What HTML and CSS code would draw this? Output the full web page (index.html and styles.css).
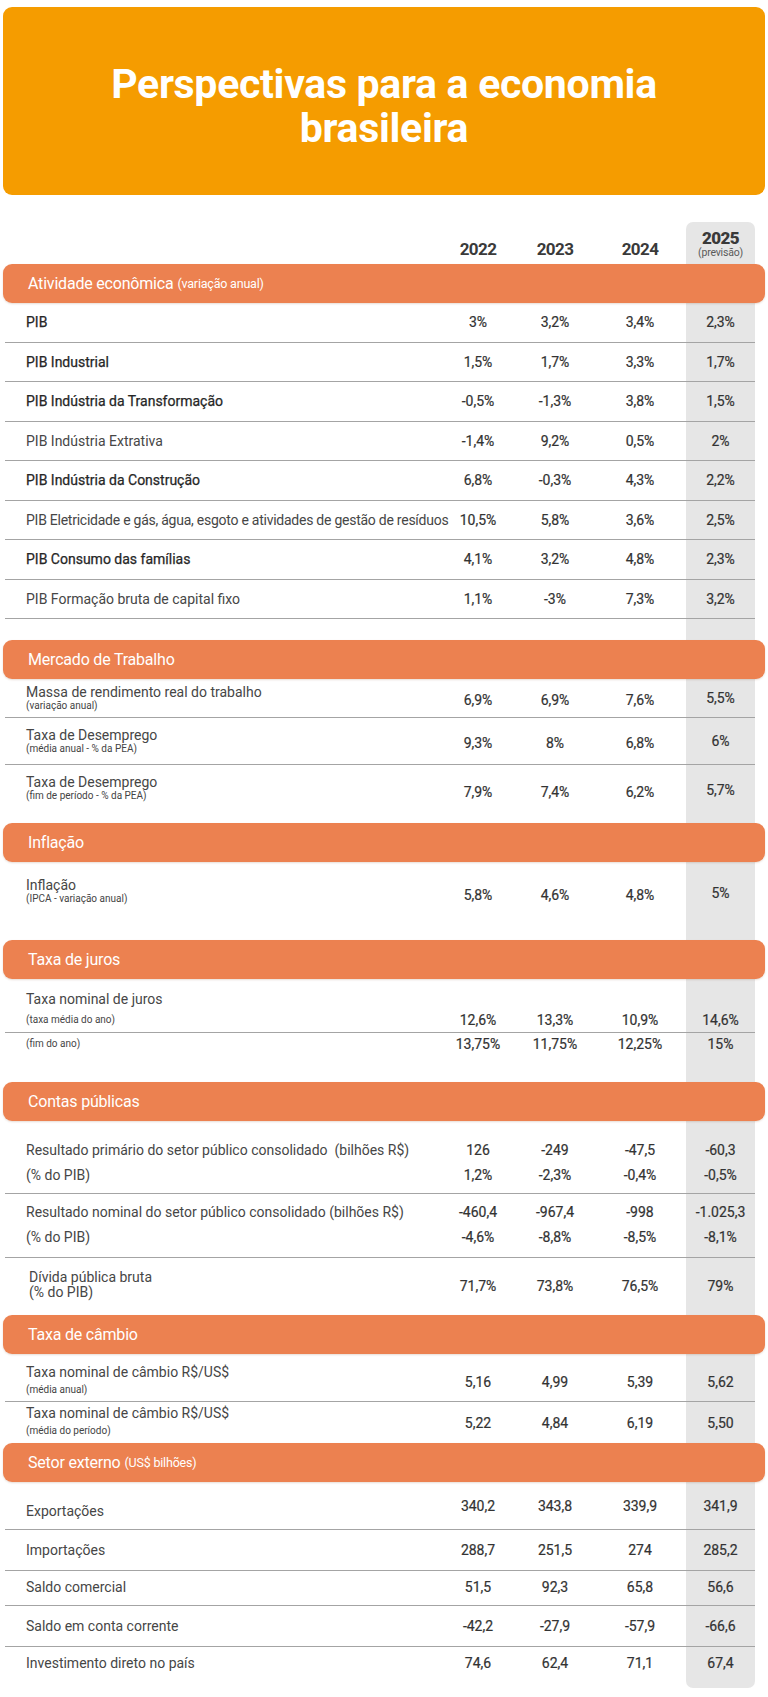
FILE: index.html
```html
<!DOCTYPE html>
<html lang="pt-BR">
<head>
<meta charset="utf-8">
<title>Perspectivas para a economia brasileira</title>
<link rel="stylesheet" href="styles.css">
</head>
<body>
<div class="page">
  <header class="hero">
    <h1 class="hero-title">Perspectivas para a economia<br>brasileira</h1>
  </header>

  <div class="sheet">
    <div class="years">
      <span></span>
      <span class="yr">2022</span>
      <span class="yr">2023</span>
      <span class="yr">2024</span>
      <span class="yr yr-fc"><b>2025</b><small>(previsão)</small></span>
    </div>

    <section class="sec">
      <h2 class="bar">Atividade econômica <small>(variação anual)</small></h2>
      <div class="body body-ativ">
        <div class="row r-std"><span class="lbl strong">PIB</span><span class="n">3%</span><span class="n">3,2%</span><span class="n">3,4%</span><span class="n">2,3%</span></div>
        <div class="row r-std"><span class="lbl strong">PIB Industrial</span><span class="n">1,5%</span><span class="n">1,7%</span><span class="n">3,3%</span><span class="n">1,7%</span></div>
        <div class="row r-std"><span class="lbl strong">PIB Indústria da Transformação</span><span class="n">-0,5%</span><span class="n">-1,3%</span><span class="n">3,8%</span><span class="n">1,5%</span></div>
        <div class="row r-std"><span class="lbl">PIB Indústria Extrativa</span><span class="n">-1,4%</span><span class="n">9,2%</span><span class="n">0,5%</span><span class="n">2%</span></div>
        <div class="row r-std"><span class="lbl strong">PIB Indústria da Construção</span><span class="n">6,8%</span><span class="n">-0,3%</span><span class="n">4,3%</span><span class="n">2,2%</span></div>
        <div class="row r-std"><span class="lbl tight">PIB Eletricidade e gás, água, esgoto e atividades de gestão de resíduos</span><span class="n">10,5%</span><span class="n">5,8%</span><span class="n">3,6%</span><span class="n">2,5%</span></div>
        <div class="row r-std"><span class="lbl strong">PIB Consumo das famílias</span><span class="n">4,1%</span><span class="n">3,2%</span><span class="n">4,8%</span><span class="n">2,3%</span></div>
        <div class="row r-std"><span class="lbl">PIB Formação bruta de capital fixo</span><span class="n">1,1%</span><span class="n">-3%</span><span class="n">7,3%</span><span class="n">3,2%</span></div>
      </div>
    </section>

    <section class="sec">
      <h2 class="bar">Mercado de Trabalho</h2>
      <div class="body">
        <div class="row r-tr1 line"><span class="lbl two">Massa de rendimento real do trabalho<small>(variação anual)</small></span><span class="n low">6,9%</span><span class="n low">6,9%</span><span class="n low">7,6%</span><span class="n">5,5%</span></div>
        <div class="row r-tr2 line"><span class="lbl two">Taxa de Desemprego<small>(média anual - % da PEA)</small></span><span class="n low">9,3%</span><span class="n low">8%</span><span class="n low">6,8%</span><span class="n">6%</span></div>
        <div class="row r-tr3"><span class="lbl two">Taxa de Desemprego<small>(fim de período - % da PEA)</small></span><span class="n low2">7,9%</span><span class="n low2">7,4%</span><span class="n low2">6,2%</span><span class="n low">5,7%</span></div>
      </div>
    </section>

    <section class="sec">
      <h2 class="bar">Inflação</h2>
      <div class="body">
        <div class="row r-inf"><span class="lbl two">Inflação<small>(IPCA - variação anual)</small></span><span class="n low2">5,8%</span><span class="n low2">4,6%</span><span class="n low2">4,8%</span><span class="n low">5%</span></div>
      </div>
    </section>

    <section class="sec">
      <h2 class="bar">Taxa de juros</h2>
      <div class="body body-juros">
        <div class="row-title">Taxa nominal de juros</div>
        <div class="row r-jb line"><span class="lbl sub">(taxa média do ano)</span><span class="n">12,6%</span><span class="n">13,3%</span><span class="n">10,9%</span><span class="n">14,6%</span></div>
        <div class="row r-jc"><span class="lbl sub">(fim do ano)</span><span class="n">13,75%</span><span class="n">11,75%</span><span class="n">12,25%</span><span class="n">15%</span></div>
      </div>
    </section>

    <section class="sec">
      <h2 class="bar">Contas públicas</h2>
      <div class="body">
        <div class="group g1 line">
          <div class="row r-sub"><span class="lbl">Resultado primário do setor público consolidado&nbsp; (bilhões R$)</span><span class="n">126</span><span class="n">-249</span><span class="n">-47,5</span><span class="n">-60,3</span></div>
          <div class="row r-sub"><span class="lbl">(% do PIB)</span><span class="n">1,2%</span><span class="n">-2,3%</span><span class="n">-0,4%</span><span class="n">-0,5%</span></div>
        </div>
        <div class="group g2 line">
          <div class="row r-sub"><span class="lbl">Resultado nominal do setor público consolidado (bilhões R$)</span><span class="n">-460,4</span><span class="n">-967,4</span><span class="n">-998</span><span class="n">-1.025,3</span></div>
          <div class="row r-sub"><span class="lbl">(% do PIB)</span><span class="n">-4,6%</span><span class="n">-8,8%</span><span class="n">-8,5%</span><span class="n">-8,1%</span></div>
        </div>
        <div class="row r-div"><span class="lbl indent">Dívida pública bruta<br>(% do PIB)</span><span class="n">71,7%</span><span class="n">73,8%</span><span class="n">76,5%</span><span class="n">79%</span></div>
      </div>
    </section>

    <section class="sec">
      <h2 class="bar">Taxa de câmbio</h2>
      <div class="body">
        <div class="row r-cb1 line"><span class="lbl two wide">Taxa nominal de câmbio R$/US$<small>(média anual)</small></span><span class="n low">5,16</span><span class="n low">4,99</span><span class="n low">5,39</span><span class="n low">5,62</span></div>
        <div class="row r-cb2"><span class="lbl two wide">Taxa nominal de câmbio R$/US$<small>(média do período)</small></span><span class="n low">5,22</span><span class="n low">4,84</span><span class="n low">6,19</span><span class="n low">5,50</span></div>
      </div>
    </section>

    <section class="sec">
      <h2 class="bar">Setor externo <small>(US$ bilhões)</small></h2>
      <div class="body">
        <div class="row r-ex1 line"><span class="lbl bottom">Exportações</span><span class="n top">340,2</span><span class="n top">343,8</span><span class="n top">339,9</span><span class="n top">341,9</span></div>
        <div class="row r-ex2 line"><span class="lbl">Importações</span><span class="n">288,7</span><span class="n">251,5</span><span class="n">274</span><span class="n">285,2</span></div>
        <div class="row r-ex3 line"><span class="lbl">Saldo comercial</span><span class="n">51,5</span><span class="n">92,3</span><span class="n">65,8</span><span class="n">56,6</span></div>
        <div class="row r-ex2 line"><span class="lbl">Saldo em conta corrente</span><span class="n">-42,2</span><span class="n">-27,9</span><span class="n">-57,9</span><span class="n">-66,6</span></div>
        <div class="row r-ex5"><span class="lbl">Investimento direto no país</span><span class="n">74,6</span><span class="n">62,4</span><span class="n">71,1</span><span class="n">67,4</span></div>
      </div>
    </section>
  </div>
</div>
</body>
</html>
```

FILE: styles.css
```css
* { box-sizing: border-box; }

html, body {
  margin: 0;
  padding: 0;
  background: #ffffff;
}

body {
  font-family: Roboto, "Liberation Sans", sans-serif;
  color: #3d3d3d;
}

.page {
  width: 768px;
  padding-bottom: 7px;
}

/* ---------- hero ---------- */
.hero {
  margin: 7px 3px 0;
  height: 188px;
  padding-top: 55px;
  background: #f59c00;
  border-radius: 9px;
  text-align: center;
}

.hero-title {
  margin: 0;
  color: #ffffff;
  font-weight: 700;
  font-size: 41px;
  line-height: 44px;
  letter-spacing: -0.3px;
}

/* ---------- sheet ---------- */
.sheet {
  margin: 27px 3px 0;
}

.sheet::after {
  content: "";
  display: block;
  margin-left: 683px;
  width: 69px;
  height: 17px;
  background: #e6e6e6;
  border-radius: 0 0 7px 7px;
}

.years,
.row {
  display: grid;
  grid-template-columns: minmax(0, 1fr) 76px 78px 92px 69px;
  padding-left: 21px;
}

.years {
  margin: 0 10px 0 2px;
  height: 42px;
  align-items: end;
}

.yr {
  text-align: center;
  font-weight: 700;
  font-size: 17px;
  line-height: 20px;
  color: #3a3a3a;
  padding-bottom: 5px;
  letter-spacing: -0.6px;
}

.yr-fc {
  align-self: stretch;
  display: flex;
  flex-direction: column;
  justify-content: flex-end;
  background: #e6e6e6;
  border-radius: 7px 7px 0 0;
  padding: 7px 0 5px;
}

.yr-fc b {
  display: block;
  font-size: 17px;
  line-height: 18px;
}

.yr-fc small {
  display: block;
  font-weight: 400;
  font-size: 10.5px;
  line-height: 12px;
  color: #5a5a5a;
  letter-spacing: -0.2px;
}

/* ---------- section bars ---------- */
.bar {
  margin: 0;
  height: 39px;
  display: flex;
  align-items: center;
  padding-left: 25px;
  background: #ec8150;
  border-radius: 9px;
  box-shadow: 0 1px 2px rgba(120, 60, 20, 0.18);
  color: #ffffff;
  font-weight: 400;
  font-size: 16px;
  letter-spacing: -0.2px;
  position: relative;
  z-index: 1;
}

.bar small {
  font-size: 12.5px;
  margin-left: 4px;
}

/* ---------- body / rows ---------- */
.body {
  margin: 0 10px 0 2px;
  background: linear-gradient(90deg, transparent 681px, #e6e6e6 681px, #e6e6e6 750px, transparent 750px);
}

.row {
  align-items: center;
}

.lbl {
  font-size: 14px;
  line-height: 16px;
  color: #464646;
  white-space: nowrap;
}

.lbl.strong {
  color: #262626;
  -webkit-text-stroke: 0.25px #262626;
}

.lbl.tight {
  letter-spacing: -0.25px;
}

.lbl.two small {
  display: block;
  font-size: 10px;
  line-height: 12px;
  color: #444;
}

.lbl.wide small {
  margin-top: 4px;
}

.lbl.sub {
  font-size: 10px;
  line-height: 12px;
}

.lbl.indent {
  padding-left: 3px;
  line-height: 15px;
}

.n {
  text-align: center;
  font-size: 14px;
  line-height: 16px;
  font-weight: 400;
  color: #333333;
  white-space: nowrap;
  -webkit-text-stroke: 0.2px #333333;
}

.n.low { padding-top: 3px; }
.n.low2 { padding-top: 7px; }

.line {
  border-bottom: 1px solid #a4a4a4;
}

/* Atividade */
.body-ativ { padding-bottom: 21px; }
.r-std {
  height: 39.5px;
  border-bottom: 1px solid #a4a4a4;
}

/* Mercado de trabalho */
.r-tr1 { padding-top: 5px; padding-bottom: 5px; }
.r-tr2 { padding-top: 9px; padding-bottom: 9px; }
.r-tr3 { padding-top: 9px; padding-bottom: 21px; }

/* Inflação */
.r-inf { padding-top: 15px; padding-bottom: 35px; }

/* Juros */
.body-juros { padding-top: 12px; padding-bottom: 28px; }
.row-title {
  padding-left: 21px;
  font-size: 14px;
  line-height: 16px;
  color: #464646;
}
.r-jb { height: 26px; }
.r-jc { height: 21px; }

/* Contas públicas */
.group.g1 { padding-top: 16px; padding-bottom: 6px; }
.group.g2 { padding-top: 5px; padding-bottom: 8px; }
.r-sub { height: 25px; }
.r-div { padding-top: 12px; padding-bottom: 15px; }
.r-div .n { padding-top: 2px; }

/* Câmbio */
.r-cb1 { padding-top: 10px; padding-bottom: 5px; }
.r-cb2 { padding-top: 3px; padding-bottom: 6px; }

/* Setor externo */
.r-ex1 { padding-top: 16px; padding-bottom: 10px; min-height: 48px; }
.r-ex1 .bottom { align-self: end; }
.r-ex1 .top { align-self: start; }
.r-ex2 { padding-top: 12px; padding-bottom: 12px; }
.r-ex3 { padding-top: 8px; padding-bottom: 10px; }
.r-ex5 { padding-top: 8px; padding-bottom: 0; }
```
